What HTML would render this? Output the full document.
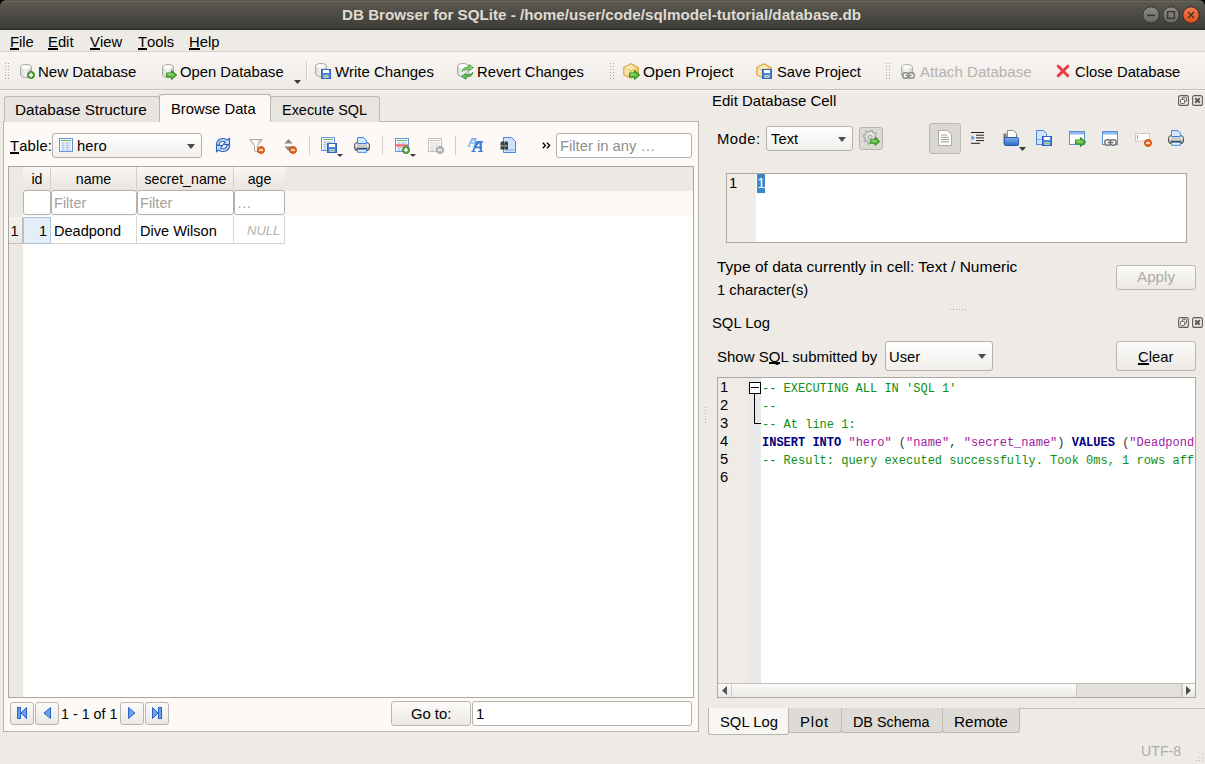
<!DOCTYPE html>
<html><head><meta charset="utf-8">
<style>
*{box-sizing:border-box;margin:0;padding:0}
html,body{width:1205px;height:764px;overflow:hidden;background:#eeebe7;font-family:"Liberation Sans",sans-serif;color:#000}
.a{position:absolute}
.t{position:absolute;white-space:nowrap;font-size:14.8px;line-height:18px}
u{text-decoration:none;position:relative}u::after{content:"";position:absolute;left:0;right:0;top:14px;height:2px;background:#000}
#title{left:0;top:0;width:1205px;height:30px;background:linear-gradient(#57544c 0px,#57544c 1px,#6a675c 1px,#6a675c 2px,#5b5850 2px,#3e3d39 28px,#2e2d2a 29px,#2e2d2a 30px);border-radius:6px 6px 0 0}
#menubar{left:0;top:30px;width:1205px;height:22px;background:#eeebe7;border-bottom:1px solid #d5d1cc}
#toolbar{left:0;top:52px;width:1205px;height:38px;background:linear-gradient(#f8f5f2,#efece8);border-bottom:1px solid #c4c0bb;box-shadow:0 1px 0 #f7f5f2}
.ic{position:absolute}
.sep{position:absolute;width:1px;background:#d2cec9}
.grip{position:absolute;width:3px;background-image:radial-gradient(circle,#a8a49f 0.7px,transparent 0.9px);background-size:3px 3px}

.tab{background:#e8e4df;border:1px solid #bdb9b4;border-bottom:none;border-radius:3px 3px 0 0}
.btab{background:#dedad5;border:1px solid #bdb9b4;border-top:none;border-radius:0 0 3px 3px}
.combo{background:linear-gradient(#fefefd,#f1efec);border:1px solid #b5b1ac;border-radius:3px}
.btn{background:linear-gradient(#fcfbfa,#ebe8e4);border:1px solid #b8b4af;border-radius:3px}
.arr{width:0;height:0;border-left:4px solid transparent;border-right:4px solid transparent;border-top:5px solid #4a4a4a}
.hd{top:167px;height:24px;background:linear-gradient(#f8f6f3,#e8e5e0);border-right:1px solid #d3cfca}
.fi{height:25px;background:#fff;border:1px solid #b5b1ac;border-radius:3px}
.td{position:absolute;text-align:center;white-space:nowrap;font-size:14.2px;line-height:18px}
.tl{position:absolute;white-space:nowrap;font-size:14.55px;line-height:18px}
.ln{position:absolute;left:720px;font-size:14.8px;line-height:18px;white-space:nowrap}
.code{position:absolute;left:762px;margin-top:2px;width:432px;overflow:hidden;font-family:"Liberation Mono",monospace;font-size:12px;line-height:18px;white-space:nowrap}
.cg{color:#0e8e12}
.kw{color:#000080}
.st{color:#a0219f}
.op{color:#333}
</style></head><body>
<svg width="0" height="0" style="position:absolute">
<defs>
<linearGradient id="gcyl" x1="0" x2="1"><stop offset="0" stop-color="#d4d4d4"/><stop offset=".45" stop-color="#f4f4f4"/><stop offset="1" stop-color="#c8c8c8"/></linearGradient>
<linearGradient id="gbox" x1="0" y1="0" x2="1" y2="1"><stop offset="0" stop-color="#fffbe6"/><stop offset=".6" stop-color="#f7d98a"/><stop offset="1" stop-color="#e9b84a"/></linearGradient>
<linearGradient id="gblue" x1="0" y1="0" x2="0" y2="1"><stop offset="0" stop-color="#7fb0ee"/><stop offset="1" stop-color="#2f68c8"/></linearGradient>
<linearGradient id="gprn" x1="0" y1="0" x2="0" y2="1"><stop offset="0" stop-color="#ffffff"/><stop offset=".5" stop-color="#dcdcdc"/><stop offset="1" stop-color="#7a7a7a"/></linearGradient>
<linearGradient id="gwbtn" x1="0" y1="0" x2="0" y2="1"><stop offset="0" stop-color="#8e8c86"/><stop offset="1" stop-color="#67655f"/></linearGradient>
<linearGradient id="gcbtn" x1="0" y1="0" x2="0" y2="1"><stop offset="0" stop-color="#f27e50"/><stop offset="1" stop-color="#df4f1c"/></linearGradient>
<linearGradient id="gfun" x1="0" y1="0" x2="1" y2="0"><stop offset="0" stop-color="#e6e6e6"/><stop offset=".5" stop-color="#ffffff"/><stop offset="1" stop-color="#bdbdbd"/></linearGradient>
<symbol id="cyl" viewBox="0 0 12 14"><path d="M.5 3.2C.5 1.6 3 .5 6 .5s5.5 1.1 5.5 2.7v7.6c0 1.6-2.5 2.7-5.5 2.7S.5 12.4.5 10.8z" fill="url(#gcyl)" stroke="#a9a9a9"/><ellipse cx="6" cy="3.1" rx="4.6" ry="1.9" fill="#fdfdfd"/></symbol>
<symbol id="plusG" viewBox="0 0 8 8"><circle cx="4" cy="4" r="3.5" fill="#4f9e36" stroke="#3a8427"/><path d="M4 1.8v4.4M1.8 4h4.4" stroke="#fff" stroke-width="1.5"/></symbol>
<symbol id="arrG" viewBox="0 0 11 10"><path d="M.7 3h4.8V.8L10.3 5 5.5 9.2V7H.7z" fill="#72c055" stroke="#2a9418" stroke-width="1.2" stroke-linejoin="round"/><path d="M1.6 4.2h5" stroke="#a9dd95" stroke-width="1"/></symbol>
<symbol id="flop" viewBox="0 0 10 10"><rect x=".5" y=".5" width="9" height="9" fill="#4a82d6" stroke="#2f63bd"/><rect x="2" y="1" width="6" height="3" fill="#fff"/><rect x="2.6" y="6.3" width="4.8" height="2.4" fill="#fff"/><rect x="3.2" y="6.8" width="3.6" height="1.4" fill="#7ac043"/></symbol>
<symbol id="box" viewBox="0 0 16 16"><path d="M8 .7l7.2 3.8v7.2L8 15.3.8 11.7V4.5z" fill="url(#gbox)" stroke="#d6a640" stroke-width="1.2" stroke-linejoin="round"/><path d="M.8 4.5L8 8.2l7.2-3.7M8 8.2v7" stroke="#e0b45a" stroke-width=".8" fill="none"/></symbol>
<symbol id="chain" viewBox="0 0 13 7"><rect x=".8" y=".8" width="6" height="5.4" rx="2.5" fill="#fff" stroke="#777" stroke-width="1.5"/><rect x="6.2" y=".8" width="6" height="5.4" rx="2.5" fill="#fff" stroke="#777" stroke-width="1.5"/><path d="M3.5 3.5h6" stroke="#777" stroke-width="1.6"/></symbol>
<symbol id="tbl" viewBox="0 0 14 14"><rect x=".5" y=".5" width="13" height="13" fill="#fff" stroke="#6495dc"/><path d="M2 2.5h10" stroke="#58b35a" stroke-width="1"/><path d="M2 5h10M2 7.3h10M2 9.6h10M2 11.9h10M4 4.5v8.5M8.5 4.5v8.5" stroke="#a9c3ea" stroke-width="1"/></symbol>
<symbol id="minO" viewBox="0 0 8 8"><circle cx="4" cy="4" r="3.5" fill="#ec6a1c" stroke="#c9500c"/><path d="M2 4h4" stroke="#fff" stroke-width="1.4"/></symbol>
<symbol id="prn" viewBox="0 0 16 16"><rect x=".6" y="5.6" width="14.8" height="8" rx="2.6" fill="url(#gprn)" stroke="#444" stroke-width="1"/><path d="M3.5 .6h6.3l2.6 2.6v3.3H3.5z" fill="#d6e6fb" stroke="#3f82d8" stroke-width="1"/><rect x="3.2" y="7.2" width="9.6" height="3.6" fill="#c9c9c9"/><path d="M3 11.4h10" stroke="#2e2e2e" stroke-width="1"/><path d="M3.6 12.3h8.8v3H3.6z" fill="#eef3fa" stroke="#3f82d8" stroke-width="1"/></symbol>
<symbol id="dd" viewBox="0 0 7 4"><path d="M0 0h7L3.5 4z" fill="#3a3a3a"/></symbol>
<symbol id="win" viewBox="0 0 16 15"><rect x=".5" y=".5" width="15" height="13" fill="#fff" stroke="#5d92da"/><rect x="1" y="1" width="14" height="2.5" fill="#8fb8ee"/></symbol>
</defs></svg>

<div class="a" style="left:0;top:0;width:1205px;height:8px;background:#000"></div><div id="title" class="a"></div>
<div class="t" style="left:342px;top:5px;font-weight:bold;font-size:15.2px;line-height:19px;color:#dfdbd2">DB Browser for SQLite - /home/user/code/sqlmodel-tutorial/database.db</div>

<div id="menubar" class="a"></div>
<div class="t" style="left:10px;top:33px"><u>F</u>ile</div>
<div class="t" style="left:48px;top:33px"><u>E</u>dit</div>
<div class="t" style="left:90px;top:33px"><u>V</u>iew</div>
<div class="t" style="left:138px;top:33px"><u>T</u>ools</div>
<div class="t" style="left:189px;top:33px"><u>H</u>elp</div>

<div id="toolbar" class="a"></div>
<div class="t" style="left:38px;top:63px;font-size:15px">New Database</div>
<div class="t" style="left:180px;top:63px">Open Database</div>
<div class="t" style="left:335px;top:63px;font-size:15px">Write Changes</div>
<div class="t" style="left:477px;top:63px">Revert Changes</div>
<div class="t" style="left:643px;top:63px;font-size:15.5px">Open Project</div>
<div class="t" style="left:777px;top:63px">Save Project</div>
<div class="t" style="left:920px;top:63px;color:#b6b2ad;font-size:15.1px">Attach Database</div>
<div class="t" style="left:1075px;top:63px">Close Database</div>


<!-- LEFT TAB WIDGET -->
<div class="a" style="left:3px;top:121px;width:696px;height:611px;background:#fcf9f6;border:1px solid #b8b4af"></div>
<div class="a tab" style="left:4px;top:96px;width:156px;height:26px"></div>
<div class="a tab" style="left:270px;top:96px;width:110px;height:26px"></div>
<div class="a" style="left:159px;top:94px;width:112px;height:28px;background:#fcf9f6;border:1px solid #b8b4af;border-bottom:none;border-radius:3px 3px 0 0"></div>
<div class="t" style="left:15px;top:101px;font-size:15.3px">Database Structure</div>
<div class="t" style="left:171px;top:100px">Browse Data</div>
<div class="t" style="left:282px;top:101px;font-size:14.45px">Execute SQL</div>

<div class="t" style="left:10px;top:137px;letter-spacing:0.15px"><u>T</u>able:</div>
<div class="a combo" style="left:52px;top:133px;width:150px;height:25px"></div>
<div class="t" style="left:77px;top:137px">hero</div>
<div class="a arr" style="left:187px;top:144px"></div>

<div class="a" style="left:556px;top:133px;width:136px;height:25px;background:#fff;border:1px solid #b5b1ac;border-radius:3px"></div>
<div class="t" style="left:560px;top:137px;color:#8f8d8a">Filter in any …</div>


<!-- table view -->
<div class="a" style="left:8px;top:166px;width:686px;height:532px;background:#fff;border:1px solid #aaa6a1"></div>
<div class="a" style="left:9px;top:167px;width:14px;height:530px;background:#ece8e4"></div>
<div class="a" style="left:23px;top:167px;width:670px;height:24px;background:#ece8e4"></div>
<div class="a" style="left:23px;top:191px;width:670px;height:25px;background:#faf7f4"></div>
<div class="a hd" style="left:23px;top:167px;width:28px"></div>
<div class="a hd" style="left:51px;top:167px;width:86px"></div>
<div class="a hd" style="left:137px;top:167px;width:97px"></div>
<div class="a hd" style="left:234px;top:167px;width:51px;border-right:none"></div>
<div class="td" style="left:23px;top:170px;width:28px">id</div>
<div class="td" style="left:50px;top:170px;width:87px">name</div>
<div class="td" style="left:136px;top:170px;width:99px">secret_name</div>
<div class="td" style="left:234px;top:170px;width:51px">age</div>
<div class="a fi" style="left:23px;top:190px;width:28px"></div>
<div class="a fi" style="left:51px;top:190px;width:86px"></div>
<div class="a fi" style="left:137px;top:190px;width:97px"></div>
<div class="a fi" style="left:234px;top:190px;width:51px"></div>
<div class="tl" style="left:54px;top:194px;color:#a3a19e">Filter</div>
<div class="tl" style="left:140px;top:194px;color:#a3a19e">Filter</div>
<div class="tl" style="left:237px;top:194px;color:#a3a19e">…</div>
<!-- data row -->
<div class="a" style="left:9px;top:217px;width:14px;height:27px;background:linear-gradient(#f4f2ef,#ebe8e4);border-bottom:1px solid #c4c0bb;border-right:1px solid #c4c0bb"></div>
<div class="a" style="left:23px;top:217px;width:28px;height:27px;background:#e4eef8;border:1px solid #a9c3dc"></div>
<div class="a" style="left:50px;top:216px;width:235px;height:28px;border-right:1px solid #d9d5d1;border-bottom:1px solid #d9d5d1"></div>
<div class="a" style="left:136px;top:216px;width:1px;height:28px;background:#d9d5d1"></div>
<div class="a" style="left:233px;top:216px;width:1px;height:28px;background:#d9d5d1"></div>
<div class="tl" style="left:10.5px;top:222px">1</div>
<div class="tl" style="left:39px;top:222px">1</div>
<div class="tl" style="left:54px;top:222px">Deadpond</div>
<div class="tl" style="left:140px;top:222px">Dive Wilson</div>
<div class="tl" style="left:247px;top:222px;color:#b3b1ae;font-style:italic;font-size:13px">NULL</div>

<!-- nav -->
<div class="a btn" style="left:10px;top:702px;width:24px;height:23px"></div>
<div class="a btn" style="left:35px;top:702px;width:24px;height:23px"></div>
<div class="t" style="left:61px;top:705px;font-size:14.3px">1 - 1 of 1</div>
<div class="a btn" style="left:120px;top:702px;width:24px;height:23px"></div>
<div class="a btn" style="left:145px;top:702px;width:24px;height:23px"></div>
<div class="a btn" style="left:391px;top:701px;width:80px;height:25px"></div>
<div class="t" style="left:411px;top:705px">Go to:</div>
<div class="a" style="left:472px;top:701px;width:220px;height:25px;background:#fff;border:1px solid #b5b1ac;border-radius:3px"></div>
<div class="t" style="left:476px;top:705px">1</div>

<!-- splitter -->
<div class="a" style="left:705px;top:407px;width:1px;height:18px;background:repeating-linear-gradient(180deg,#aaa6a1 0 1px,#f8f6f3 1px 2px,transparent 2px 3px)"></div>

<!-- RIGHT: Edit Database Cell -->
<div class="t" style="left:712px;top:92px;font-size:15px">Edit Database Cell</div>
<div class="t" style="left:717px;top:130px;letter-spacing:0.5px">Mode:</div>
<div class="a combo" style="left:766px;top:126px;width:87px;height:25px"></div>
<div class="t" style="left:771px;top:130px">Text</div>
<div class="a arr" style="left:838px;top:137px"></div>
<div class="a" style="left:859px;top:127px;width:24px;height:23px;background:#dcd8d3;border:1px solid #b7b3ae;border-radius:3px"></div>
<div class="a" style="left:929px;top:123px;width:32px;height:31px;background:#dbd7d2;border:1px solid #bcb8b3;border-radius:3px"></div>

<div class="a" style="left:726px;top:173px;width:461px;height:70px;background:#fff;border:1px solid #aba7a2"></div>
<div class="a" style="left:727px;top:174px;width:29px;height:68px;background:#efebe7"></div>
<div class="a" style="left:757px;top:174px;width:8px;height:19px;background:#3b86c9"></div>
<div class="t" style="left:729px;top:174px">1</div>
<div class="t" style="left:757px;top:174px;color:#fff">1</div>

<div class="t" style="left:717px;top:258px;font-size:15.5px">Type of data currently in cell: Text / Numeric</div>
<div class="t" style="left:717px;top:281px">1 character(s)</div>
<div class="a btn" style="left:1116px;top:265px;width:80px;height:25px"></div>
<div class="t" style="left:1137px;top:268px;color:#aeaaa6;font-size:15.2px">Apply</div>
<div class="a" style="left:950px;top:309px;width:18px;height:1px;background:repeating-linear-gradient(90deg,#aaa6a1 0 1px,#f8f6f3 1px 2px,transparent 2px 3px)"></div>

<!-- SQL Log -->
<div class="t" style="left:712px;top:314px">SQL Log</div>
<div class="t" style="left:717px;top:348px;font-size:15px">Show S<u>Q</u>L submitted by</div>
<div class="a combo" style="left:885px;top:341px;width:108px;height:30px"></div>
<div class="t" style="left:889px;top:348px">User</div>
<div class="a arr" style="left:978px;top:354px"></div>
<div class="a btn" style="left:1116px;top:341px;width:80px;height:30px"></div>
<div class="t" style="left:1138px;top:348px"><u>C</u>lear</div>

<div class="a" style="left:717px;top:377px;width:479px;height:321px;background:#fff;border:1px solid #aba7a2"></div>
<div class="a" style="left:718px;top:378px;width:29px;height:305px;background:#efebe7"></div>
<div class="a" style="left:747px;top:378px;width:14px;height:305px;background-color:#f2f2f2;background-image:linear-gradient(45deg,#e0e0e0 25%,transparent 25%,transparent 75%,#e0e0e0 75%),linear-gradient(45deg,#e0e0e0 25%,transparent 25%,transparent 75%,#e0e0e0 75%);background-size:2px 2px;background-position:0 0,1px 1px"></div>
<div class="ln" style="top:378px">1<br>2<br>3<br>4<br>5<br>6</div>
<div class="code" style="top:378px"><span class="cg">-- EXECUTING ALL IN 'SQL 1'</span><br><span class="cg">--</span><br><span class="cg">-- At line 1:</span><br><b class="kw">INSERT</b> <b class="kw">INTO</b> <span class="st">"hero"</span> <span class="op">(</span><span class="st">"name"</span><span class="op">,</span> <span class="st">"secret_name"</span><span class="op">)</span> <b class="kw">VALUES</b> <span class="op">(</span><span class="st">"Deadpond"</span><br><span class="cg">-- Result: query executed successfully. Took 0ms, 1 rows affected</span></div>
<div class="a" style="left:749px;top:382px;width:12px;height:12px;border:1px solid #000;background:#fff"></div>
<div class="a" style="left:751px;top:387px;width:8px;height:1px;background:#000"></div>
<div class="a" style="left:754px;top:394px;width:1px;height:30px;background:#000"></div>
<div class="a" style="left:754px;top:423px;width:7px;height:1px;background:#000"></div>
<!-- scrollbar -->
<div class="a" style="left:718px;top:683px;width:477px;height:14px;background:linear-gradient(#fbfaf9,#eceae7);border-top:1px solid #c3bfba"></div>
<div class="a" style="left:731px;top:684px;width:1px;height:13px;background:#cfcbc6"></div>
<div class="a" style="left:1076px;top:684px;width:106px;height:13px;background:#e3e0dc;border-left:1px solid #c9c5c0;border-right:1px solid #c9c5c0"></div>

<!-- bottom tabs -->
<div class="a" style="left:708px;top:708px;width:497px;height:1px;background:#c4c0bb"></div>
<div class="a btab" style="left:788px;top:708px;width:54px;height:25px"></div>
<div class="a btab" style="left:841px;top:708px;width:102px;height:25px"></div>
<div class="a btab" style="left:942px;top:708px;width:78px;height:25px"></div>
<div class="a" style="left:708px;top:708px;width:81px;height:27px;background:#f8f6f3;border:1px solid #b8b4af;border-top:none;border-radius:0 0 3px 3px"></div>
<div class="t" style="left:720px;top:713px">SQL Log</div>
<div class="t" style="left:800px;top:713px;letter-spacing:0.9px">Plot</div>
<div class="t" style="left:853px;top:713px;font-size:14.35px">DB Schema</div>
<div class="t" style="left:954px;top:713px;font-size:15.4px">Remote</div>
<div class="t" style="left:1141px;top:742px;color:#b0aca7;font-size:14.2px">UTF-8</div>

<!-- title buttons -->
<svg class="ic" style="left:1142px;top:6px" width="18" height="18" viewBox="0 0 18 18"><circle cx="9" cy="9" r="8.2" fill="url(#gwbtn)" stroke="#34332f" stroke-width="1"/><path d="M5 9.3h8" stroke="#3a3935" stroke-width="1.6"/></svg>
<svg class="ic" style="left:1162px;top:6px" width="18" height="18" viewBox="0 0 18 18"><circle cx="9" cy="9" r="8.2" fill="url(#gwbtn)" stroke="#34332f" stroke-width="1"/><rect x="5.6" y="5.6" width="6.8" height="6.8" fill="none" stroke="#3a3935" stroke-width="1.4"/></svg>
<svg class="ic" style="left:1182px;top:6px" width="18" height="18" viewBox="0 0 18 18"><circle cx="9" cy="9" r="8.2" fill="url(#gcbtn)" stroke="#3a2a22" stroke-width="1"/><path d="M6 6l6 6M12 6l-6 6" stroke="#3a3320" stroke-width="1.3"/></svg>

<!-- toolbar -->
<div class="grip" style="left:4px;top:62px;height:18px"></div><div class="grip" style="left:7px;top:62px;height:18px"></div>
<svg class="ic" style="left:20px;top:64px" width="12" height="14"><use href="#cyl"/></svg>
<svg class="ic" style="left:27px;top:71px" width="8" height="8"><use href="#plusG"/></svg>
<svg class="ic" style="left:162px;top:64px" width="12" height="14"><use href="#cyl"/></svg>
<svg class="ic" style="left:166px;top:70px" width="11" height="10"><use href="#arrG"/></svg>
<svg class="ic" style="left:294px;top:80px" width="7" height="4"><use href="#dd"/></svg>
<div class="sep" style="left:306px;top:62px;height:19px;box-shadow:1px 0 0 #fff"></div>
<svg class="ic" style="left:315px;top:63px" width="12" height="14"><use href="#cyl"/></svg>
<svg class="ic" style="left:321px;top:69px" width="10" height="10"><use href="#flop"/></svg>
<svg class="ic" style="left:457px;top:63px" width="12" height="14"><use href="#cyl"/></svg>
<svg class="ic" style="left:461px;top:64px" width="13" height="16" viewBox="0 0 13 16"><path d="M1 7.5C1.5 4.5 4 3 8 3V.7l4.5 2.9L8 6.5V5C5 5 3 5.7 1 7.5z" fill="#8fd277" stroke="#44a334" stroke-width=".9" stroke-linejoin="round"/><path d="M12 8.5c-.5 3-3 4.5-7 4.5v2.3L.5 12.4 5 9.5V11c3 0 5-.7 7-2.5z" fill="#6fbf58" stroke="#2f8f22" stroke-width=".9" stroke-linejoin="round"/></svg>
<div class="grip" style="left:609px;top:62px;height:18px"></div><div class="grip" style="left:612px;top:62px;height:18px"></div>
<svg class="ic" style="left:623px;top:63px" width="16" height="16"><use href="#box"/></svg>
<svg class="ic" style="left:629px;top:70px" width="11" height="10"><use href="#arrG"/></svg>
<svg class="ic" style="left:756px;top:63px" width="16" height="16"><use href="#box"/></svg>
<svg class="ic" style="left:762px;top:69px" width="10" height="10"><use href="#flop"/></svg>
<div class="grip" style="left:885px;top:62px;height:18px"></div><div class="grip" style="left:888px;top:62px;height:18px"></div>
<svg class="ic" style="left:901px;top:64px;opacity:.85" width="12" height="14"><use href="#cyl"/></svg>
<svg class="ic" style="left:902px;top:72px;opacity:.8" width="13" height="7"><use href="#chain"/></svg>
<svg class="ic" style="left:1056px;top:64px" width="14" height="14" viewBox="0 0 14 14"><path d="M2.2 2.2l9.6 9.6M11.8 2.2l-9.6 9.6" stroke="#f23a44" stroke-width="3" stroke-linecap="round"/></svg>

<!-- table toolbar -->
<svg class="ic" style="left:59px;top:138px" width="14" height="14"><use href="#tbl"/></svg>
<svg class="ic" style="left:215px;top:137px" width="16" height="16" viewBox="0 0 16 16"><path d="M1.5 8C1.5 4 4 1.5 8 1.5c2 0 3.5.7 4.5 1.7l2-2v6.3H8.2l2.3-2.3C9.8 4.6 9 4.3 8 4.3 5.6 4.3 4.3 6 4.3 8z" fill="#c9ddf6" stroke="#2d64c0" stroke-width="1.1" stroke-linejoin="round"/><path d="M14.5 8c0 4-2.5 6.5-6.5 6.5-2 0-3.5-.7-4.5-1.7l-2 2V8.5h6.3l-2.3 2.3c.7.6 1.5.9 2.5.9 2.4 0 3.7-1.7 3.7-3.7z" fill="#c9ddf6" stroke="#2d64c0" stroke-width="1.1" stroke-linejoin="round"/></svg>
<svg class="ic" style="left:249px;top:138px" width="16" height="16" viewBox="0 0 16 16"><path d="M.8 1.5h12.4L8.5 7.5v6.5L5.5 13V7.5z" fill="url(#gfun)" stroke="#a8a8a8" stroke-width="1" stroke-linejoin="round"/></svg>
<svg class="ic" style="left:257px;top:146px" width="8" height="8"><use href="#minO"/></svg>
<svg class="ic" style="left:284px;top:139px" width="9" height="13" viewBox="0 0 9 13"><path d="M4.5 0L8.5 4.5H.5z M.5 7.5h8L4.5 12z" fill="#8a8a8a"/></svg>
<svg class="ic" style="left:289px;top:146px" width="8" height="8"><use href="#minO"/></svg>
<div class="sep" style="left:309px;top:136px;height:19px"></div>
<svg class="ic" style="left:321px;top:137px" width="14" height="14"><use href="#tbl"/></svg>
<svg class="ic" style="left:327px;top:143px" width="10" height="10"><use href="#flop"/></svg>
<svg class="ic" style="left:337px;top:154px" width="6" height="3" viewBox="0 0 7 4" preserveAspectRatio="none"><use href="#dd"/></svg>
<svg class="ic" style="left:354px;top:137px" width="16" height="16"><use href="#prn"/></svg>
<div class="sep" style="left:382px;top:136px;height:19px"></div>
<svg class="ic" style="left:395px;top:138px" width="14" height="14" viewBox="0 0 14 14"><rect x=".5" y=".5" width="13" height="13" fill="#fff" stroke="#6495dc"/><path d="M2 2.5h10" stroke="#58b35a"/><path d="M2 5h10M2 9.6h10M2 11.9h10M4 4.5v8.5M8.5 4.5v8.5" stroke="#a9c3ea"/><rect x="1" y="6.3" width="12" height="2.2" fill="#f26b6b"/></svg>
<svg class="ic" style="left:402px;top:146px" width="8" height="8"><use href="#plusG"/></svg>
<svg class="ic" style="left:410px;top:154px" width="6" height="3" viewBox="0 0 7 4" preserveAspectRatio="none"><use href="#dd"/></svg>
<svg class="ic" style="left:428px;top:138px;opacity:.55;filter:grayscale(1)" width="14" height="14"><use href="#tbl"/></svg>
<svg class="ic" style="left:436px;top:146px" width="8" height="8" viewBox="0 0 8 8"><circle cx="4" cy="4" r="3.5" fill="#bdbdbd" stroke="#9a9a9a"/><path d="M2 4h4" stroke="#fff" stroke-width="1.4"/></svg>
<div class="sep" style="left:455px;top:136px;height:19px"></div>
<svg class="ic" style="left:462px;top:134px" width="22" height="19" viewBox="0 0 22 19"><path d="M14.6 7H21V8.6H19.9V17H21V18H16V17H17.6V14.2H13.6L12.1 17H13.8V18H9.3V17H10.2ZM17.6 8.9V12.5H14.3Z" transform="translate(-2.95 -1.53) scale(.855 .79)" fill="#8cb8ee" fill-rule="evenodd"/><path d="M14.6 7H21V8.6H19.9V17H21V18H16V17H17.6V14.2H13.6L12.1 17H13.8V18H9.3V17H10.2ZM17.6 8.9V12.5H14.3Z" fill="#3f7fdc" fill-rule="evenodd"/></svg>
<svg class="ic" style="left:500px;top:137px" width="17" height="16" viewBox="0 0 17 16"><path d="M3.5.5h8l4 4v11h-12z" fill="#cfe2fa" stroke="#4c86d6"/><path d="M5.5 13h8" stroke="#7aaae6"/><path d="M1.2 4.5h2.6l.4 1.5v6.5H.6V6z" fill="#3a3a3a"/><path d="M4.8 4.5h2.6l.6 1.5v6.5H4.4V6z" fill="#3a3a3a"/><rect x="1.2" y="8" width="2.4" height="1.5" fill="#aaa"/><rect x="5" y="8" width="2.4" height="1.5" fill="#aaa"/></svg>
<svg class="ic" style="left:542px;top:142px" width="9" height="7" viewBox="0 0 9 7"><path d="M.8.8L3.4 3.5.8 6.2M5 .8L7.6 3.5 5 6.2" stroke="#000" stroke-width="1.3" fill="none"/></svg>

<!-- nav -->
<svg class="ic" style="left:17px;top:707px" width="10" height="12" viewBox="0 0 10 12"><rect x=".5" y=".5" width="3" height="11" fill="#6aa0e8" stroke="#2a62cc"/><path d="M9.5.5v11L4 6z" fill="#6aa0e8" stroke="#2a62cc" stroke-linejoin="round"/></svg>
<svg class="ic" style="left:43px;top:707px" width="8" height="12" viewBox="0 0 8 12"><path d="M7.5.5v11L1 6z" fill="#6aa0e8" stroke="#2a62cc" stroke-linejoin="round"/></svg>
<svg class="ic" style="left:128px;top:707px" width="8" height="12" viewBox="0 0 8 12"><path d="M.5.5v11L7 6z" fill="#6aa0e8" stroke="#2a62cc" stroke-linejoin="round"/></svg>
<svg class="ic" style="left:152px;top:707px" width="10" height="12" viewBox="0 0 10 12"><path d="M.5.5v11L6 6z" fill="#6aa0e8" stroke="#2a62cc" stroke-linejoin="round"/><rect x="6.5" y=".5" width="3" height="11" fill="#6aa0e8" stroke="#2a62cc"/></svg>

<!-- dock buttons -->
<svg class="ic" style="left:1178px;top:95px" width="11" height="11" viewBox="0 0 11 11"><rect x=".6" y=".6" width="9.8" height="9.8" rx="2" fill="none" stroke="#5f5d59" stroke-width="1.1"/><rect x="4.3" y="2.3" width="4.2" height="4.2" rx="1" fill="none" stroke="#5f5d59" stroke-width="1"/><rect x="2.5" y="4.3" width="4.2" height="4.2" rx="1" fill="#f8f6f3" stroke="#5f5d59" stroke-width="1"/></svg>
<svg class="ic" style="left:1192px;top:95px" width="11" height="11" viewBox="0 0 11 11"><rect x=".6" y=".6" width="9.8" height="9.8" rx="2" fill="none" stroke="#5f5d59" stroke-width="1.1"/><path d="M3.2 3.2l4.6 4.6M7.8 3.2l-4.6 4.6" stroke="#5f5d59" stroke-width="2.1"/></svg>
<svg class="ic" style="left:1178px;top:317px" width="11" height="11" viewBox="0 0 11 11"><rect x=".6" y=".6" width="9.8" height="9.8" rx="2" fill="none" stroke="#5f5d59" stroke-width="1.1"/><rect x="4.3" y="2.3" width="4.2" height="4.2" rx="1" fill="none" stroke="#5f5d59" stroke-width="1"/><rect x="2.5" y="4.3" width="4.2" height="4.2" rx="1" fill="#f8f6f3" stroke="#5f5d59" stroke-width="1"/></svg>
<svg class="ic" style="left:1192px;top:317px" width="11" height="11" viewBox="0 0 11 11"><rect x=".6" y=".6" width="9.8" height="9.8" rx="2" fill="none" stroke="#5f5d59" stroke-width="1.1"/><path d="M3.2 3.2l4.6 4.6M7.8 3.2l-4.6 4.6" stroke="#5f5d59" stroke-width="2.1"/></svg>

<!-- edit cell toolbar -->
<svg class="ic" style="left:863px;top:130px" width="16" height="16" viewBox="0 0 16 16"><defs><linearGradient id="ggear" x1="0" y1="0" x2="0" y2="1"><stop offset="0" stop-color="#f4f4f4"/><stop offset="1" stop-color="#c6c6c6"/></linearGradient></defs><path d="M12.50 7.20 L14.18 7.75 L13.86 9.36 L12.10 9.23 L10.95 10.95 L11.75 12.52 L10.38 13.44 L9.23 12.10 L7.20 12.50 L6.65 14.18 L5.04 13.86 L5.17 12.10 L3.45 10.95 L1.88 11.75 L0.96 10.38 L2.30 9.23 L1.90 7.20 L0.22 6.65 L0.54 5.04 L2.30 5.17 L3.45 3.45 L2.65 1.88 L4.02 0.96 L5.17 2.30 L7.20 1.90 L7.75 0.22 L9.36 0.54 L9.23 2.30 L10.95 3.45 L12.52 2.65 L13.44 4.02 L12.10 5.17Z" fill="url(#ggear)" stroke="#8e8e8e" stroke-width=".9" stroke-linejoin="round"/><circle cx="7.2" cy="7.2" r="2" fill="#dcd8d3" stroke="#9a9a9a" stroke-width=".8"/></svg>
<svg class="ic" style="left:870px;top:137px" width="10" height="9" viewBox="0 0 11 10"><use href="#arrG"/></svg>
<svg class="ic" style="left:938px;top:130px" width="14" height="16" viewBox="0 0 14 16"><path d="M.5.5h9l4 4v11H.5z" fill="#fff" stroke="#a9a9a9"/><path d="M3 5h6M3 7.3h8M3 9.6h8M3 11.9h8" stroke="#9a9a9a"/></svg>
<svg class="ic" style="left:971px;top:132px" width="14" height="12" viewBox="0 0 14 12"><path d="M0 .5h13M5 3.2h8M5 5.9h8M5 8.6h8M0 11.3h9" stroke="#222" stroke-width="1"/><path d="M.5 3.5L4 5.9.5 8.3z" fill="#4a90e2"/></svg>
<svg class="ic" style="left:1003px;top:130px" width="16" height="16" viewBox="0 0 16 16"><path d="M4.5.5h6l3 3v5h-9z" fill="#fff" stroke="#888"/><path d="M.5 3.5h3v11h-3z" fill="#777"/><rect x="1.5" y="7.5" width="14" height="8" rx="1" fill="url(#gblue)" stroke="#2a5aa8"/></svg>
<svg class="ic" style="left:1019px;top:147px" width="7" height="4"><use href="#dd"/></svg>
<svg class="ic" style="left:1036px;top:130px" width="17" height="16" viewBox="0 0 17 16"><path d="M.5.5h7l3 3v11h-10z" fill="#cfe2fa" stroke="#4c86d6"/><path d="M1 9.5h6" stroke="#7aaae6"/></svg>
<svg class="ic" style="left:1042px;top:136px" width="10" height="10"><use href="#flop"/></svg>
<svg class="ic" style="left:1069px;top:131px" width="16" height="15"><use href="#win"/></svg>
<svg class="ic" style="left:1075px;top:137px" width="11" height="10"><use href="#arrG"/></svg>
<svg class="ic" style="left:1102px;top:131px" width="16" height="15"><use href="#win"/></svg>
<svg class="ic" style="left:1104px;top:139px" width="13" height="7"><use href="#chain"/></svg>
<svg class="ic" style="left:1135px;top:133px" width="16" height="9" viewBox="0 0 16 9"><rect x=".5" y=".5" width="14" height="7.5" fill="#fff" stroke="#c8c8c8"/><path d="M2.5 2v4" stroke="#999"/></svg>
<svg class="ic" style="left:1144px;top:139px" width="8" height="8"><use href="#minO"/></svg>
<svg class="ic" style="left:1168px;top:130px" width="16" height="16"><use href="#prn"/></svg>

<!-- scrollbar arrows -->
<svg class="ic" style="left:722px;top:686px" width="6" height="9" viewBox="0 0 6 9"><path d="M5 0v9L0 4.5z" fill="#555"/></svg>
<svg class="ic" style="left:1186px;top:686px" width="6" height="9" viewBox="0 0 6 9"><path d="M0 0v9l5-4.5z" fill="#4a4a4a"/></svg>
<div class="a" style="left:1182px;top:684px;width:1px;height:13px;background:#cfcbc6"></div>
<!-- size grip -->
<div class="a" style="left:1192px;top:750px;width:13px;height:13px;background-image:radial-gradient(circle,#b9b5b0 0.6px,transparent 0.8px);background-size:3px 3px;clip-path:polygon(100% 0,100% 100%,0 100%)"></div>
</body></html>
